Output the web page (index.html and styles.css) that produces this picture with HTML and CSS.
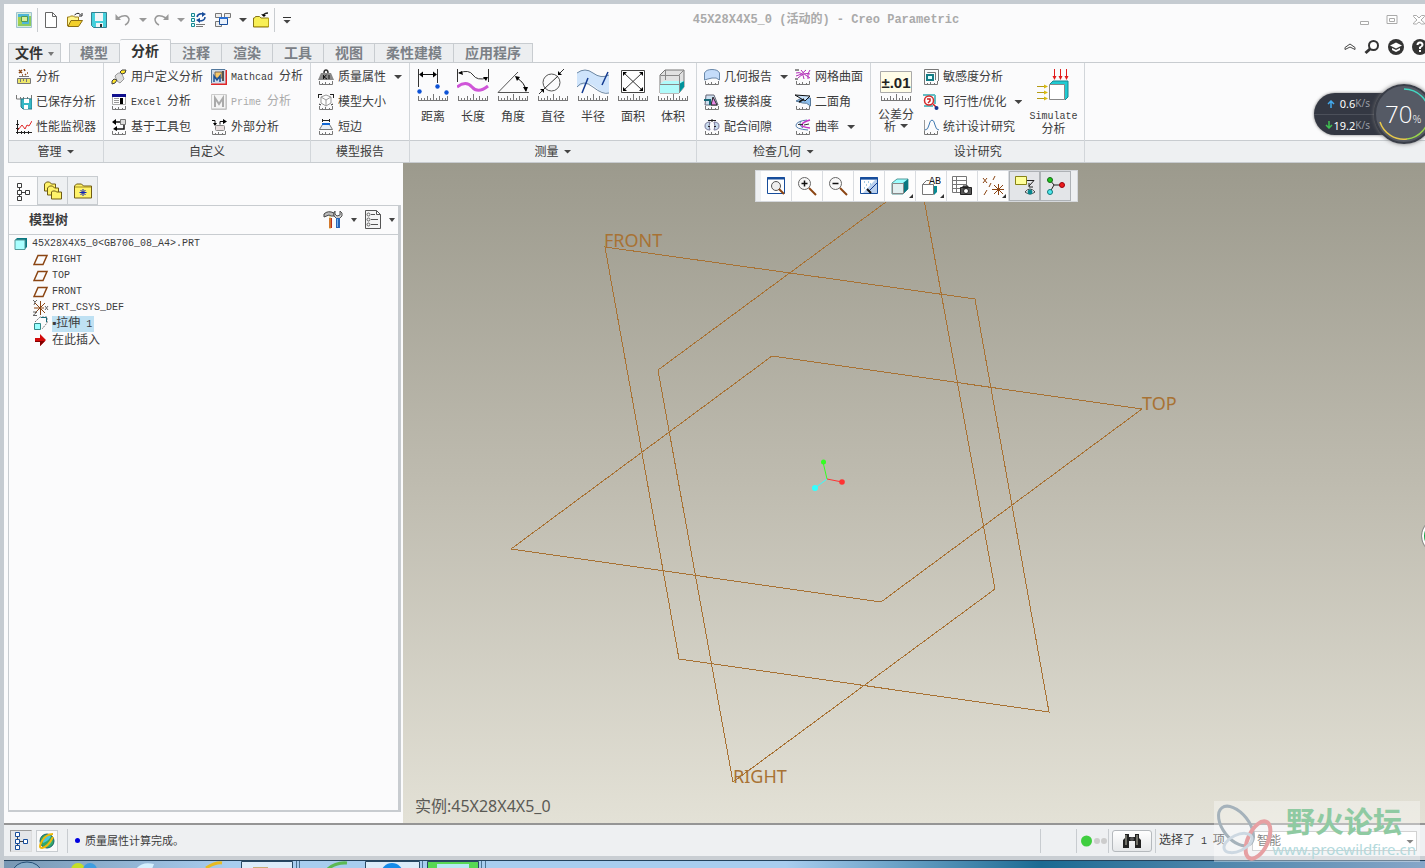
FILE: index.html
```html
<!DOCTYPE html>
<html lang="zh-CN">
<head>
<meta charset="utf-8">
<title>45X28X4X5_0 (活动的) - Creo Parametric</title>
<link rel="stylesheet" href="styles.css">
</head>
<body>
<svg class="sprite" aria-hidden="true">
  <symbol id="ruler" viewBox="0 0 16 4"><path d="M1.500 0v3.500h13V0M4.500 2v1M7.500 1v2M11.500 2v1" fill="none" stroke="#777"/></symbol>
  <symbol id="ruler-lg" viewBox="0 0 30 7"><path d="M0 6.500h30M.5 2v4M3.500 4v2M6.500 4v2M9.500 2v4M12.500 4v2M15.500 0v6M18.500 4v2M21.500 2v4M24.500 4v2M27.500 4v2M29.500 2v4" fill="none" stroke="#777"/></symbol>
  <symbol id="plane" viewBox="0 0 16 12"><path d="M5 1.500h9l-4 9H1z" fill="none" stroke="#8b4513" stroke-width="1.500"/></symbol>
  <symbol id="nodes" viewBox="0 0 14 18"><path d="M3.500 4v10M5 9.500h4" stroke="#444"/><path d="M1.500.5h4v4h-4zM1.500 7.500h4v4h-4zM1.500 13.500h4v4h-4zM9.500 7.500h4v4h-4z" fill="#fff" stroke="currentColor" stroke-width="1"/></symbol>
</svg>
<div class="app">
  <header class="titlebar">
    <div class="quick">
      <svg class="i16" viewBox="0 0 16 16"><path fill="#d5ecdd" stroke="#9fc3cf" d="M.5.500h15v15H.5z"/><path fill="#4eb6d8" d="M2 2h11v10H2z"/><path fill="#a6d04a" d="M2 5h4v7H2z"/><path fill="#d5ef9a" stroke="#4d9a55" d="M5.500 4.500h6v5h-6z"/><path d="M2 13h12V4" stroke="#8ccb5e" fill="none" stroke-width="2"/></svg>
      <i class="sep"></i>
      <button class="tool" aria-label="新建"><svg class="i16" viewBox="0 0 16 16"><path d="M2.500.5h7l4 4v11h-11zM9.500.5v4h4" fill="#fff" stroke="#666"/></svg></button>
      <button class="tool" aria-label="打开"><svg class="i16" viewBox="0 0 16 16"><path d="M.5 14V5h2l1-1h3l1 1h4v3" fill="#fff58a" stroke="#9b7b18"/><path d="M1 14.500 4 8.500h11.500l-4 6z" fill="#f2cf2b" stroke="#8d6f14"/><path d="M7.500 3q4-3.500 6 0M15 1v3h-3" fill="none" stroke="#222"/></svg></button>
      <button class="tool" aria-label="保存"><svg class="i16" viewBox="0 0 16 16"><path d="M.5.500h15v15h-13l-2-2z" fill="#45d0dc" stroke="#348090"/><path d="M4 1h8v8H4zM5 11h7v4H5z" fill="#f2f5f7"/><path d="M9 12h2v3H9z" fill="#333"/></svg></button>
      <button class="tool" aria-label="撤消"><svg class="i16" viewBox="0 0 16 16"><path d="M3 6q9-5 11 1 0 4-4 6" fill="none" stroke="#999" stroke-width="1.500"/><path d="M.5 8V2L6 8z" fill="#999"/></svg></button>
      <i class="caret dim"></i>
      <button class="tool" aria-label="重做"><svg class="i16" viewBox="0 0 16 16"><path d="M13 6Q4 1 2 7q0 4 4 6" fill="none" stroke="#999" stroke-width="1.500"/><path d="M15.500 8V2L10 8z" fill="#999"/></svg></button>
      <i class="caret dim"></i>
      <button class="tool" aria-label="重新生成"><svg class="i16" viewBox="0 0 16 16"><path d="M.5 1.500h3v3h-3zM.5 6.500h3v3h-3zM.5 11.500h3v3h-3z" fill="#d0ffff" stroke="#16858f"/><path d="M5 12.500h9M5 14.500h7" stroke="#777"/><path d="M6 5q1-4 6-3M14 5q0 4-6 4" fill="none" stroke="#174d9b" stroke-width="1.500"/><path d="M11 0v5l4-3zM9 6v5L5 8z" fill="#174d9b"/></svg></button>
      <button class="tool" aria-label="窗口"><svg class="i16" viewBox="0 0 16 16"><path d="M.5 1.500h6v4h-6zM9.500 1.500h6v4h-6zM.5 9.500h6v5h-6z" fill="#eee" stroke="#777"/><path d="M4.500 5.500h8v7h-8z" fill="#e8f0fb" stroke="#174d9b"/><path d="M4 6h9" stroke="#2b70d3" stroke-width="2"/></svg></button>
      <i class="caret"></i>
      <button class="tool" aria-label="关闭"><svg class="i16" viewBox="0 0 16 16"><path d="M.5 15V6h1l1-1.500h4L8 6h7.500v9z" fill="#f8ef56" stroke="#857519"/><path d="M1 14.500h14.500V6" fill="none" stroke="#b8a419"/><path d="M10 4q1-3 5-3" stroke="#222" fill="none" stroke-width="1.500"/><path d="m8 2 3 3 2-2z"/></svg></button>
      <i class="sep"></i>
      <button class="tool custom" aria-label="自定义快速访问工具栏"><i class="caret"></i></button>
    </div>
    <h1 class="title">45X28X4X5_0 (活动的) - Creo Parametric</h1>
    <div class="winbtns">
      <button class="tool" aria-label="最小化"><svg width="12" height="12" viewBox="0 0 12 12"><path d="M1.500 7.500h8v3h-8z" fill="#fff" stroke="#aaa"/></svg></button>
      <button class="tool" aria-label="还原"><svg width="12" height="12" viewBox="0 0 12 12"><path d="M1 1.500h10v8H1zM3.500 4.500h5v3h-5z" fill="#fff" stroke="#aaa"/></svg></button>
      <button class="tool" aria-label="关闭窗口"><svg width="12" height="12" viewBox="0 0 12 12"><path d="M.5 1.500h3L6 4l2.500-2.500h3v1L8 6l3.500 3v1h-3L6 8l-2.500 2h-3V9L4 6 .5 2.500z" fill="#fff" stroke="#aaa"/></svg></button>
    </div>
  </header>

  <nav class="tabs">
    <button class="tab file">文件<i class="caret small"></i></button>
    <button class="tab">模型</button><button class="tab active">分析</button><button class="tab">注释</button><button class="tab">渲染</button><button class="tab">工具</button><button class="tab">视图</button><button class="tab">柔性建模</button><button class="tab">应用程序</button>
    <div class="helpers">
      <button class="tool" aria-label="最小化功能区"><svg width="12" height="8" viewBox="0 0 12 8"><path d="M1 4.500 6 1l5 3.500v2L6 4 1 6.500z" fill="#fff" stroke="#444"/></svg></button>
      <button class="tool" aria-label="搜索"><svg class="i16" viewBox="0 0 16 16"><circle cx="9.500" cy="6.500" r="4.500" fill="#fff" stroke="#333" stroke-width="2"/><path d="m6 10-4.500 4" stroke="#333" stroke-width="3"/></svg></button>
      <button class="tool" aria-label="学习"><svg class="i16" viewBox="0 0 16 16"><circle cx="8" cy="8" r="8" fill="#333"/><path d="m2 6.500 6-3 6 3-6 3zM4 9l4 2 4-2v2l-4 2-4-2z" fill="#fff"/></svg></button>
      <button class="tool" aria-label="帮助"><svg class="i16" viewBox="0 0 16 16"><circle cx="8" cy="8" r="8" fill="#333"/><path d="M5.500 6q0-2.500 2.500-2.500T10.500 6Q10.500 7 8 8.500V10" fill="none" stroke="#fff" stroke-width="2"/><path d="M7 11h2v2H7z" fill="#fff"/></svg></button>
    </div>
  </nav>

  <section class="ribbon">
    <div class="group">
      <div class="body"><div class="col">
        <button class="cmd"><svg class="i16" viewBox="0 0 16 16"><path d="m3 1 3 3m0-3L3 4M8 0l1 2m2 2h1M6 6h1m2-1 1 1" stroke="#8b4513" stroke-width="1.500"/><path d="M3 7.500h10" stroke="#777"/><path d="M1.500 9.500h13v5h-13z" fill="#eee86a" stroke="#777"/><path d="M4.500 10v3m3-3v2m3-2v3" stroke="#777"/></svg>分析</button>
        <button class="cmd"><svg class="i16" viewBox="0 0 16 16"><path d="M.5 1v4h15V1M4.500 3v2m3-2v2m4-2v2" fill="none" stroke="#777"/><path d="M5 5h11v10H7l-2-2z" fill="#35b8c6" stroke="#267888"/><path d="M8 5h5v4H8zM8 11h4v4H8z" fill="#fff"/></svg>已保存分析</button>
        <button class="cmd"><svg class="i16" viewBox="0 0 16 16"><path d="M1.500 1v14M0 13.500h16M5.500 12v3m3-3v3m4-3v3M0 9.500h3M0 5.500h3" stroke="#222"/><path d="m2 11 4-5 3 4 2-4 2 1 3-5" fill="none" stroke="#e12626"/></svg>性能监视器</button>
      </div></div><button class="foot">管理<i class="caret"></i></button>
    </div>
    <div class="group">
      <div class="body"><div class="col">
        <button class="cmd"><svg class="i16" viewBox="0 0 16 16"><path d="M4 7q4-5 7-2l2 5-4 4-3-2z" fill="#ddd" stroke="#999"/><path d="m9 3 2-2 4 0-1 3-3 1zM1 12l2-2 3 1-2 3-3 1z" fill="#ffe52b" stroke="#444"/></svg>用户定义分析</button>
        <button class="cmd"><svg class="i16" viewBox="0 0 16 16"><path d="M1.500 1.500h13v9h-13z" fill="#fff" stroke="#aaa"/><path d="M1 0h14v3H1z" fill="#10108f"/><path d="M3 4.500h5m-5 2h5m-5 2h5" stroke="#999"/><path d="M9 4h3v6H9z"/><use href="#ruler" y="12" width="16" height="4"/></svg><span><span class="lat">Excel&nbsp;</span>分析</span></button>
        <button class="cmd"><svg class="i16" viewBox="0 0 16 16"><path d="M9.500.500h5v5h-5z" fill="#ddd" stroke="#777"/><path d="M9 3H3m10 3v4H4" fill="none" stroke="#111" stroke-width="1.500"/><path d="m5 0-4 3L5 6zM6 7 2 10l4 2z"/><use href="#ruler" y="12" width="16" height="4"/></svg>基于工具包</button>
      </div><div class="col">
        <button class="cmd"><svg class="i16" viewBox="0 0 16 16"><path d="M0 0h15v15H0z" fill="#cfdcea"/><path d="M0 15.500h15.500V1" fill="none" stroke="#e12626" stroke-width="2"/><path d="M.5 14V.5H14" fill="none" stroke="#51779c"/><path d="M4 3h7v6H4z" fill="#f6c86a" stroke="#765"/><path d="M3 13V7l3 4 3-4v6" fill="none" stroke="#1c5196" stroke-width="1.500"/><path d="M11 2h2v10h-2z" fill="#555"/></svg><span><span class="lat">Mathcad&nbsp;</span>分析</span></button>
        <button class="cmd off"><svg class="i16" viewBox="0 0 16 16"><path d="M.5.500h15v15H.5z" fill="#f5f5f5" stroke="#ccc"/><path d="M4 13V4l4 6 4-6v9" fill="none" stroke="#aaa" stroke-width="2"/><path d="M1 15h14V1" fill="none" stroke="#bbb"/></svg><span><span class="lat">Prime&nbsp;</span>分析</span></button>
        <button class="cmd"><svg class="i16" viewBox="0 0 16 16"><path d="M1 1.500h3v4m5 0v-3h4" fill="none" stroke="#111"/><path d="m2 4 2 3 2-3zM12 0l4 2.500L12 5z"/><rect x="4.500" y="6.500" width="9" height="5" rx="1" fill="#e8dede" stroke="#888"/><use href="#ruler" y="12" width="16" height="4"/></svg>外部分析</button>
      </div></div><div class="foot">自定义</div>
    </div>
    <div class="group">
      <div class="body"><div class="col">
        <button class="cmd"><svg class="i16" viewBox="0 0 16 16"><path d="M6 4q0-3 2-3t2 3" fill="none" stroke="#333" stroke-width="1.500"/><path d="M3 4h10l3 7H0z" fill="#888"/><path d="M5.500 6v4m3-4L6 8l3 2m2-4v4" stroke="#111" fill="none"/><use href="#ruler" y="12" width="16" height="4"/></svg>质量属性<i class="caret"></i></button>
        <button class="cmd"><svg class="i16" viewBox="0 0 16 16"><path d="M3 3 8 1l5 2v6l-5 3-5-3zM3 3l5 3 5-3M8 6v6" fill="#fff" stroke="#999"/><path d="M.5 1v3m15-3v3M0 .5h4m8 0h4M1 10l2 1m12-1-2 1" stroke="#222"/><use href="#ruler" y="12" width="16" height="4"/></svg>模型大小</button>
        <button class="cmd"><svg class="i16" viewBox="0 0 16 16"><path d="M4.500 0v3m7-3v3m-7-1.500h7" stroke="#222"/><path d="M4.500 5.500h7l3 5h-13z" fill="#e8eef5" stroke="#777"/><path d="M4 5h8" stroke="#1267d4" stroke-width="2"/><use href="#ruler" y="12" width="16" height="4"/></svg>短边</button>
      </div></div><div class="foot">模型报告</div>
    </div>
    <div class="group measure">
      <div class="body">
        <button class="big"><svg class="i32" viewBox="0 0 32 32"><path d="M1.500 0v18M20.500 0v14" stroke="#333"/><path d="M3 5.500h16" stroke="#111"/><path d="m2 5.500 4-3v6zM20 5.500l-4-3v6z"/><circle cx="2.500" cy="22.500" r="2.200" fill="#0d52d6"/><circle cx="20.500" cy="17.500" r="2.200" fill="#0d52d6"/><circle cx="29.500" cy="23.500" r="2.200" fill="#0d52d6"/><use href="#ruler-lg" x="1" y="25" width="30" height="7"/></svg>距离</button>
        <button class="big"><svg class="i32" viewBox="0 0 32 32"><path d="M.5 0v13M31.500 0v13" stroke="#333"/><path d="M2 4q10-4 14 2t14 3" fill="none" stroke="#333"/><path d="m1 4 4-2 1 4zM31 8l-5 0 3 4z"/><path d="M0 18q9-7 15 0t16-1" fill="none" stroke="#cf55d8" stroke-width="3"/><use href="#ruler-lg" x="1" y="25" width="30" height="7"/></svg>长度</button>
        <button class="big"><svg class="i32" viewBox="0 0 32 32"><path d="M21 3 1 23.500h31" fill="none" stroke="#555"/><path d="M20 9q8 5 9 13" fill="none" stroke="#111"/><path d="m18 7 5 1-3 4zM26 18h5l-2 5z"/><use href="#ruler-lg" x="1" y="25" width="30" height="7"/></svg>角度</button>
        <button class="big"><svg class="i32" viewBox="0 0 32 32"><circle cx="14.500" cy="13.500" r="8.500" fill="none" stroke="#555"/><path d="M7 20 21 7M2 25l4-4M27 0l-4 4" stroke="#333"/><path d="m7 20 0 4-4-4zM21 6V2l4 4z"/><use href="#ruler-lg" x="1" y="25" width="30" height="7"/></svg>直径</button>
        <button class="big"><svg class="i32" viewBox="0 0 32 32"><path d="M0 4q8-6 16 0t16 2v18q-8 0-14-6T0 18z" fill="#cfe4fb"/><path d="M0 4q8-6 16 0t16 2M0 18q6-8 16 0t16 6" fill="none" stroke="#6c87a3"/><path d="m5 24 6-15M25 16l6-13" stroke="#123a91" stroke-width="1.500"/><use href="#ruler-lg" x="1" y="25" width="30" height="7"/></svg>半径</button>
        <button class="big"><svg class="i32" viewBox="0 0 32 32"><path d="M4.500 1.500h23v22h-23z" fill="#fff" stroke="#444"/><path d="m7 4 18 17M25 4 7 21" stroke="#333"/><path d="M6 3h4l-4 4zM26 3h-4l4 4zM6 22h4l-4-4zM26 22h-4l4-4z"/><use href="#ruler-lg" x="1" y="25" width="30" height="7"/></svg>面积</button>
        <button class="big"><svg class="i32" viewBox="0 0 32 32"><path d="m3 6 5-5h19v17l-5 6H3z" fill="#e1e1e1" stroke="#777"/><path d="m3 15 4-3h20v6l-5 6H3z" fill="#b0fafa"/><path d="M22 15v9l5-6v-6z" fill="#00929b"/><path d="M3.500 6.500h19V24M22 6l5-5M8.500 1v10M3 15.500h19" fill="none" stroke="#888"/><use href="#ruler-lg" x="1" y="25" width="30" height="7"/></svg>体积</button>
      </div><button class="foot">测量<i class="caret"></i></button>
    </div>
    <div class="group">
      <div class="body geometry"><div class="col">
        <button class="cmd"><svg class="i16" viewBox="0 0 16 16"><path d="M.5 11V4Q2 .5 8 .5T15.500 4v7q-3-3-7.500-2T.5 11z" fill="#c4dcfa" stroke="#6a89ab"/><use href="#ruler" y="12" width="16" height="4"/></svg>几何报告<i class="caret"></i></button>
        <button class="cmd"><svg class="i16" viewBox="0 0 16 16"><path d="M2 1h8l4 10H1z" fill="#cddff0" stroke="#667"/><path d="m9 3 4 8H7z" fill="#e78be5" stroke="#222"/><path d="M0 6h6v5" fill="none" stroke="#186978" stroke-width="2"/><use href="#ruler" y="12" width="16" height="4"/></svg>拔模斜度</button>
        <button class="cmd"><svg class="i16" viewBox="0 0 16 16"><path d="M6 3Q1 3 1 7t5 4q-2-4 0-8zm4 0q5 0 5 4t-5 4q2-4 0-8z" fill="#c8dbed" stroke="#779"/><path d="M4 1.500h8M8 0v3M4 7.500h2m4 0h2" stroke="#222"/><use href="#ruler" y="12" width="16" height="4"/></svg>配合间隙</button>
      </div><div class="col">
        <button class="cmd"><svg class="i16" viewBox="0 0 16 16"><path d="M1 4q7-2 8 6M3 9q6-6 12-4M6 1q3 5 9 8M11 1q-4 5-10 6M15 1q-3 3-2 9" fill="none" stroke="#b22bb8"/><path d="M0 1h4m-4 9h3" stroke="#222"/><use href="#ruler" y="12" width="16" height="4"/></svg>网格曲面</button>
        <button class="cmd"><svg class="i16" viewBox="0 0 16 16"><path d="m1 7 6-3h8.500v8q-4-4-8-3z" fill="#8fc0ee" stroke="#579"/><path d="m0 1 15 1-5 5z" fill="#cbe3fa" stroke="#111"/><path d="m4 8 5-3" stroke="#111" stroke-width="1.500"/><use href="#ruler" y="12" width="16" height="4"/></svg>二面角</button>
        <button class="cmd"><svg class="i16" viewBox="0 0 16 16"><path d="M12 1Q2 2 1 6t12 5M6 2q-3 4 2 7" fill="none" stroke="#557fae"/><path d="M15 1Q8 3 7 5.500T15 9" fill="none" stroke="#c536c8" stroke-width="1.500"/><path d="M3 5.500h5M9 6l5-1" stroke="#333"/><use href="#ruler" y="12" width="16" height="4"/></svg>曲率<i class="caret"></i></button>
      </div></div><button class="foot">检查几何<i class="caret"></i></button>
    </div>
    <div class="group">
      <div class="body study">
        <button class="big"><svg class="i32" viewBox="0 0 32 32"><path d="M.5 2.500h31v21H.5z" fill="#fffde8" stroke="#aaa"/><text x="16" y="19" text-anchor="middle" class="tol">±.01</text><use href="#ruler-lg" x="1" y="25" width="30" height="7"/></svg><span class="two">公差分<br>析<i class="caret"></i></span></button>
        <div class="col">
          <button class="cmd"><svg class="i16" viewBox="0 0 16 16"><path d="M1.500 12V.5h14V12M4.500 4V3.500h8V11" fill="none" stroke="#777"/><path d="M4 6h6v5H4z" fill="#dff" stroke="#147c85" stroke-width="2"/><use href="#ruler" y="12" width="16" height="4"/></svg>敏感度分析</button>
          <button class="cmd"><svg class="i16" viewBox="0 0 16 16"><path d="M0 1h12M1 12h9M12 1v9" fill="none" stroke="#63bdc4" stroke-width="2"/><circle cx="6" cy="6.500" r="4.500" fill="#fff" stroke="#d42a2a" stroke-width="1.500"/><path d="M4 5h3v2l-2 2M10 10l3 3" fill="none" stroke="#c22" stroke-width="1.500"/><circle cx="13.500" cy="14" r="2" fill="#173790"/></svg>可行性/优化<i class="caret"></i></button>
          <button class="cmd"><svg class="i16" viewBox="0 0 16 16"><path d="M1.500 1v11" stroke="#999"/><path d="M2 11q3 0 4-5t3-5 3 5 4 5" fill="none" stroke="#3f78b0"/><use href="#ruler" y="12" width="16" height="4"/></svg>统计设计研究</button>
        </div>
        <button class="big"><svg class="i32" viewBox="0 0 32 32"><path d="M17.500 0v8M23.500 0v8M29.500 0v8" stroke="#e21b1b"/><path d="m15.500 7 2 4 2-4zm6 0 2 4 2-4zm6 0 2 4 2-4z" fill="#e21b1b"/><path d="M0 17.500h8M0 23.500h8M0 29.500h8" stroke="#b59b14"/><path d="m7 15.500 4 2-4 2zm0 6 4 2-4 2zm0 6 4 2-4 2z" fill="#d8b910"/><path d="m13 15 3-3h15v16l-3 3" fill="#20cbd2" stroke="#178891"/><path d="M12.500 15.500h15v15h-15z" fill="#fff" stroke="#888"/></svg><span class="two"><span class="lat">Simulate</span><br>分析</span></button>
      </div><div class="foot">设计研究</div>
    </div>
    <div class="group rest"><div class="body"></div><div class="foot"></div></div>
  </section>

  <main class="work">
    <aside class="side">
      <div class="sidetabs">
        <button class="sidetab on" aria-label="模型树"><svg width="14" height="18"><use href="#nodes"/></svg></button>
        <button class="sidetab" aria-label="文件夹浏览器"><svg width="20" height="20" viewBox="0 0 20 20"><g fill="#fff36a" stroke="#705c15"><path d="M1.500 10V3l2-2h3l2 2h4v7z"/><path d="M4.500 14V7l2-2h3l2 2h4v7z"/><path d="M8.500 18v-7l1-1h3l1 1h5v7z"/></g></svg></button>
        <button class="sidetab" aria-label="收藏夹"><svg width="18" height="18" viewBox="0 0 18 18"><path d="M.5 16V4l2-2h5l2 2h8v12z" fill="#fff36a" stroke="#705c15"/><path d="M1 5h16" stroke="#a58d1b"/><path d="M9 7v7M5.500 10.500h7m-6-2.500 5 5m0-5-5 5" stroke="#1022b8"/></svg></button>
      </div>
      <section class="panel">
        <div class="phead"><h2>模型树</h2>
          <button class="tool" aria-label="设置"><svg width="20" height="20" viewBox="0 0 20 20"><path d="M1 4q4-4 10-1v3H8L6 5 1 7z" fill="#bbb" stroke="#444"/><path d="M6 8h3v10H6z" fill="#b83221"/><path d="M7 6v13" stroke="#edc33d"/><path d="M12 1v3l2 2 3-1V1l2 2v3l-3 3h-2l-3-3V3z" fill="#ccc" stroke="#555"/><path d="M13 8h4v10h-4z" fill="#2865b6"/><path d="M14.500 9v8" stroke="#77b5ed"/></svg></button><i class="caret small"></i>
          <button class="tool list" aria-label="显示"><svg width="16" height="20" viewBox="0 0 16 20"><path d="M.5.500h11l4 4v14H.5zM11.500.5v4h4" fill="#f5f5f5" stroke="#555"/><path d="M6 4.500h4M6 9.500h7m-7 5h7" stroke="#555"/><circle cx="3.500" cy="4.500" r="1.500" fill="none" stroke="#666"/><circle cx="3.500" cy="9.500" r="1.500" fill="none" stroke="#666"/><circle cx="3.500" cy="14.500" r="1.500" fill="none" stroke="#666"/></svg></button><i class="caret small"></i>
        </div>
        <ul class="tree">
          <li class="root"><svg width="14" height="12" viewBox="0 0 14 12"><path d="m1 2 2-2h10v9l-3 3" fill="#087780"/><path d="M1 2h10v9.500H1z" fill="#aff" stroke="#599"/></svg><span class="lat">45X28X4X5_0&lt;GB706_08_A4&gt;.PRT</span></li>
          <li><svg width="16" height="12"><use href="#plane"/></svg><span class="lat">RIGHT</span></li>
          <li><svg width="16" height="12"><use href="#plane"/></svg><span class="lat">TOP</span></li>
          <li><svg width="16" height="12"><use href="#plane"/></svg><span class="lat">FRONT</span></li>
          <li><svg width="16" height="16" viewBox="0 0 16 16"><path d="m2 3 10 10M12 3 2 13M1 8h10M7.500 1v14" stroke="#8b4513"/><path d="m0 0 2 2 2-2M2 2 1 5m-1 7h4l-4 3.500h4M12 6l3 4m0-4-3 4" fill="none" stroke="#666"/></svg><span class="lat">PRT_CSYS_DEF</span></li>
          <li><svg width="16" height="16" viewBox="0 0 16 16"><path d="M1.500 7.500h6v6h-6z" fill="#9ff" stroke="#388"/><path d="m2 6 5-5h7v6l-5 6" fill="none" stroke="#777" stroke-dasharray="2 1"/><path d="M8 1.500h5.500V6" fill="none" stroke="#186978"/></svg><span class="sel">▪拉伸<span class="lat">&nbsp;1</span></span></li>
          <li><svg width="16" height="12" viewBox="0 0 16 12"><path d="M2 4h5V0l6 6-6 6V8H2z" fill="#d10a0a"/><path d="M2 7h10l-5 5V8H2z" fill="#820000"/></svg><span>在此插入</span></li>
        </ul>
      </section>
    </aside>
    <section class="view">
      <svg class="scene" viewBox="403 163 1022 660">
        <g fill="none" stroke="#a87234" shape-rendering="crispEdges"><path d="m605 247 370 52 74 413-370-53z"/><path d="m658 370 75 412 262-193-75-412z"/><path d="m772 356 370 53-261 193-370-53z"/></g>
        <g class="datum"><text x="604" y="247">FRONT</text><text x="1142" y="410">TOP</text><text x="733" y="783">RIGHT</text></g>
        <path d="m827 479-4-17" stroke="#3f2"/><path d="m827 479 15 3" stroke="#f33"/><path d="m827 479-12 9" stroke="#3ff"/>
        <circle cx="823.500" cy="462" r="2.500" fill="#3f2"/><circle cx="842" cy="482" r="2.800" fill="#f33"/><circle cx="815" cy="488" r="3" fill="#3ff"/>
      </svg>
      <div class="viewtools">
        <button aria-label="重新调整"><svg width="18" height="18" viewBox="0 0 18 18"><path d="M.5.500h17v16H.5z" fill="#fff" stroke="#174d9b"/><path d="M0 1.500h18" stroke="#174d9b" stroke-width="2"/><circle cx="9" cy="9" r="4.500" fill="#eee" stroke="#555"/><path d="m12 12 5 5" stroke="#8b4513" stroke-width="2"/></svg></button>
        <button aria-label="放大"><svg width="20" height="20" viewBox="0 0 20 20"><circle cx="7.500" cy="7.500" r="6" fill="#f8f8f8" stroke="#666"/><path d="M4.500 7.500h6m-3-3v6" stroke="#111" stroke-width="1.500"/><path d="m12 12 7 7" stroke="#8b4513" stroke-width="2"/></svg></button>
        <button aria-label="缩小"><svg width="20" height="20" viewBox="0 0 20 20"><circle cx="7.500" cy="7.500" r="6" fill="#f8f8f8" stroke="#666"/><path d="M4.500 7.500h6" stroke="#111" stroke-width="1.500"/><path d="m12 12 7 7" stroke="#8b4513" stroke-width="2"/></svg></button>
        <button aria-label="重画"><svg width="18" height="18" viewBox="0 0 18 18"><path d="M.5.500h17v16H.5z" fill="#b9d0ee" stroke="#174d9b"/><path d="M0 1.500h18" stroke="#174d9b" stroke-width="2"/><path d="M1 3h14L3 16H1z" fill="#fff"/><path d="m9 14 8-8" stroke="#123a91"/><path d="m7 12 4 4" stroke="#111" stroke-width="2"/><path d="M4 5h1m3 0h1m-3 3h1M4 11h1m5-4h1" stroke="#49c"/></svg></button>
        <button aria-label="显示样式" class="more"><svg width="18" height="18" viewBox="0 0 18 18"><path d="m1 6 5-4h11v10l-5 5H1z" fill="#9ff" stroke="#599"/><path d="M12 6v11l5-5V2z" fill="#087780"/><path d="M1.500 6.500h11v10h-11z" fill="#e1eff0" stroke="#888"/></svg></button>
        <button aria-label="已保存方向" class="more"><svg width="20" height="20" viewBox="0 0 20 20"><path d="M1.500 18.500v-10h11v10zM1.500 8.500l4-4h3" fill="#fff" stroke="#777"/><path d="M13 10h3v6l-3 3z" fill="#088b94"/><text x="8" y="8" class="ab">AB</text></svg></button>
        <button aria-label="视图管理器"><svg width="20" height="20" viewBox="0 0 20 20"><path d="M.5.500h14v16H.5zM.5 4.500h14m-14 4h14m-14 4h14M4.500 0v16" fill="#fff" stroke="#777"/><path d="M8.500 11.500h11v7h-11zM11 10h5v2h-5z" fill="#555" stroke="#222"/><circle cx="14" cy="15" r="2.500" fill="#fff" stroke="#222"/></svg></button>
        <button aria-label="基准显示" class="more"><svg width="22" height="20" viewBox="0 0 22 20"><path d="m1 2 4 5m0-5L1 7M13 0l-2 4m-2 3-2 4m-2 3-3 5M12 9l9 9m0-9-9 9M10 13.500h12M16.500 8v11" stroke="#8b4513"/></svg></button>
        <button aria-label="注释显示" class="pressed"><svg width="20" height="20" viewBox="0 0 20 20"><path d="M.5.500h11v8H.5z" fill="#ffff9b" stroke="#888315"/><path d="M12 4.500h7L14 10m0-3v4h4" fill="none" stroke="#222"/><path d="M10 16q5-6 10 0-5 4-10 0z" fill="#fff" stroke="#444"/><circle cx="15" cy="16" r="2.500" fill="#08858d"/></svg></button>
        <button aria-label="旋转中心" class="pressed"><svg width="18" height="18" viewBox="0 0 18 18"><path d="m3 3 4 5h8M7 8l-4 7" fill="none" stroke="#222"/><circle cx="3" cy="3" r="2.500" fill="#1fc71f" stroke="#176617"/><circle cx="15" cy="8" r="2.500" fill="#ed1c1c" stroke="#901"/><circle cx="3" cy="15" r="2.500" fill="#4fe9ef" stroke="#177"/></svg></button>
      </div>
      <p class="instance">实例:45X28X4X5_0</p>
      <svg class="edge" viewBox="0 0 36 36"><circle cx="18" cy="18" r="16" fill="#1aa346" stroke="#fff" stroke-width="2"/><circle cx="18" cy="18" r="17.500" fill="none" stroke="#888"/></svg>
    </section>
  </main>

  <footer class="status">
    <button class="sbtn down" aria-label="切换导航器"><svg width="14" height="18"><use href="#nodes"/></svg></button>
    <button class="sbtn" aria-label="切换浏览器"><svg width="18" height="18" viewBox="0 0 18 18"><circle cx="9" cy="9" r="7" fill="#35a866" stroke="#17616f"/><path d="M5 6q4-4 8-2-2 5-8 7zM7 14q5 0 7-5" fill="#4bc6de"/><path d="M15 2Q8 2 4 9T4 16q6-1 11-11" fill="none" stroke="#f0b90b" stroke-width="2"/></svg></button>
    <i class="sep"></i>
    <p class="msg"><i class="dot"></i>质量属性计算完成。</p>
    <div class="sright">
      <i class="sep"></i><i class="sep far"></i>
      <svg class="lights" width="26" height="12" viewBox="0 0 26 12"><circle cx="5.500" cy="6" r="5.500" fill="#3fce3f"/><circle cx="16" cy="6" r="3" fill="#ccc"/><circle cx="23" cy="6" r="3" fill="#ccc"/></svg>
      <i class="sep"></i>
      <button class="find" aria-label="查找"><svg width="18" height="16" viewBox="0 0 18 16"><path d="M2 1h4v3h6V1h4v4l2 2v8h-6V8H6v7H0V7l2-2z" fill="#222"/><path d="M3 2v10m11-10v10" stroke="#bba"/><circle cx="9" cy="6" r="2" fill="#555"/></svg></button>
      <i class="sep"></i>
      <span class="count">选择了<span class="lat">&nbsp;1&nbsp;</span>项</span>
      <label class="filter"><select aria-label="选择过滤器"><option>智能</option></select><i class="caret"></i></label>
    </div>
  </footer>
  <div class="taskbar">
    <svg width="560" height="8" viewBox="4 0 560 8"><ellipse cx="27" cy="11" rx="14" ry="10" fill="#89aeca" stroke="#244f75"/><circle cx="78" cy="9" r="7" fill="#c5df24"/><circle cx="90" cy="9" r="7" fill="#3e9de0"/><path d="M136 8q6-8 18-5l-2 5z" fill="#d5f0ff"/><path d="M206 7q10-6 16-5" stroke="#e7bb22" stroke-width="3" fill="none"/><path d="M241.500 8V.5h51V8M365.500 8V.5h54V8" fill="#dcecf9" stroke="#274863"/><path d="M296.500 0v8m3-8v8m123-8v8m59-8v8m4-8v8" stroke="#4a7392"/><path d="M253 6h15v2h-15z" fill="#c9ad77"/><path d="M328 8q8-7 19-6" fill="none" stroke="#5cb954" stroke-width="3"/><circle cx="392" cy="13" r="11" fill="#168be8"/><path d="M427.500 8V.5h51V8" fill="#58d853" stroke="#274863"/><path d="M437 3h32v5h-32z" fill="#b8e9f3"/></svg>
  </div>

  <aside class="speed">
    <div class="rates"><p><svg width="8" height="8" viewBox="0 0 8 8"><path d="M4 8V1M1 4l3-3 3 3" fill="none" stroke="#43a9ed" stroke-width="1.500"/></svg>0.6<small>K/s</small></p><p><svg width="8" height="8" viewBox="0 0 8 8"><path d="M4 0v7M1 4l3 3 3-3" fill="none" stroke="#3fc252" stroke-width="1.500"/></svg>19.2<small>K/s</small></p></div>
    <div class="gauge"><svg viewBox="0 0 60 60"><circle cx="30" cy="30" r="29" fill="#555a65" stroke="#3a3e48" stroke-width="2"/><path d="M30 5a25 25 0 0 1 25 25" fill="none" stroke="#43d8c2" stroke-width="1.500"/><path d="M55 30a25 25 0 0 1-22 25" fill="none" stroke="#9ad84a" stroke-width="1.500"/><path d="M33 55A25 25 0 0 1 6 38" fill="none" stroke="#e8c94b" stroke-width="1.500"/></svg><span>70<small>%</small></span></div>
  </aside>
  <div class="mark">
    <svg width="60" height="60" viewBox="0 0 60 60" fill="none"><ellipse cx="22" cy="25" rx="13" ry="23" transform="rotate(-38 22 25)" stroke="#a5b2bb" stroke-width="3"/><ellipse cx="44" cy="39" rx="10" ry="20" transform="rotate(25 44 39)" stroke="#e6a0a3" stroke-width="4"/><ellipse cx="24" cy="42" rx="15" ry="8" transform="rotate(-25 24 42)" stroke="#cdd8e2" stroke-width="3"/></svg>
    <div><strong>野火论坛</strong><span>www.proewildfire.cn</span></div>
  </div>
</div>
</body>
</html>
```
FILE: styles.css
```css
* { box-sizing: border-box; }
body { margin: 0; overflow: hidden; font: 12px/16px "Liberation Sans", "Noto Sans CJK SC", sans-serif; color: #3c3c3c; }
h1, h2, p, ul { margin: 0; padding: 0; font-size: inherit; }
button { margin: 0; padding: 0; border: 0; background: none; font: inherit; color: inherit; cursor: pointer; }
svg { display: block; flex: none; }
.sprite { display: none; }
.i16 { width: 16px; height: 16px; }
.i32 { width: 32px; height: 32px; }
.lat { font-family: "Liberation Mono", monospace; font-size: 10px; }
.sep { flex: none; width: 1px; height: 24px; background: #c8ccd0; }
.caret { flex: none; display: inline-block; width: 8px; height: 4px; background: #444; clip-path: polygon(0 0, 100% 0, 50% 100%); }
.caret.dim { background: #999; }
.caret.small { width: 6px; height: 4px; }

.app { position: relative; display: flex; flex-direction: column; height: 100vh; overflow: hidden; background: #fbfbfc; border-top: 4px solid #c5cbd1; border-left: 4px solid #c5cbd1; }

.titlebar { display: flex; align-items: center; height: 35px; padding: 0 0 3px 12px; }
.quick { display: flex; align-items: center; gap: 8px; }
.quick > .sep { margin: 0 -3px; }
.quick > .caret { margin-right: -2px; }
.custom { padding: 4px 2px 4px 3px; }
.custom .caret { display: block; }
.custom::before { content: ""; display: block; width: 8px; height: 1px; margin-bottom: 2px; background: #333; }
.title { flex: 1; text-align: center; font: bold 12px/16px "Liberation Mono", "Noto Sans CJK SC", monospace; color: #aaa; white-space: nowrap; }
.winbtns { display: flex; gap: 15px; }

.tabs { display: flex; align-items: flex-end; height: 24px; padding-left: 4px; margin-bottom: -1px; position: relative; }
.tab { height: 20px; padding: 0 11px; border: 1px solid #c8ccd0; border-left-width: 0; background: #eceef0; color: #7b8086; font-size: 14px; font-weight: bold; line-height: 18px; white-space: nowrap; }
.tab.file { margin-right: 8px; padding: 0 6px; border-left-width: 1px; color: #333; }
.tab.file + .tab { border-left-width: 1px; padding-left: 10px; }
.tab.file .caret { margin: 0 0 2px 5px; background: #777; }
.tab.active { height: 24px; padding-bottom: 2px; border-bottom: 0; border-radius: 2px 2px 0 0; background: #fbfbfc; color: #333; line-height: 22px; }
.helpers { display: flex; align-items: center; gap: 8px; height: 32px; margin: 0 -3px 0 auto; }

.ribbon { display: flex; height: 101px; margin-left: 4px; border: solid #c8ccd0; border-width: 1px 0 1px 1px; }
.group { display: flex; flex-direction: column; border-right: 1px solid #d2d6da; }
.group.rest { flex: 1; border-right: 0; }
.body { flex: 1; display: flex; gap: 8px; padding: 2px 7px 0; }
.body.geometry { gap: 7px; }
.measure .body { gap: 0; padding: 2px 3px 0; }
.body.study { gap: 7px; padding-left: 5px; }
.col { display: flex; flex-direction: column; gap: 1px; }
.cmd { display: flex; align-items: center; gap: 4px; height: 24px; white-space: nowrap; }
.cmd .caret { margin-left: 4px; }
.cmd.off { color: #aaa; }
.big { display: flex; flex-direction: column; align-items: center; min-width: 40px; padding-top: 4px; gap: 8px; white-space: nowrap; }
.big .two { line-height: 12px; }
.big .two .caret { margin: 0 0 3px 4px; }
.tol { font: bold 15px "Liberation Sans", sans-serif; fill: #222; }
.foot { display: flex; align-items: center; justify-content: center; gap: 5px; width: 100%; height: 22px; border-top: 1px solid #c8ccd0; background: #eef0f2; }

.work { flex: 1; display: flex; min-height: 0; }
.side { flex: none; display: flex; flex-direction: column; width: 399px; padding: 13px 2px 11px 4px; }
.sidetabs { display: flex; }
.sidetab { display: flex; align-items: center; justify-content: center; width: 30px; height: 29px; border: 1px solid #c8ccd0; border-left-width: 0; background: #eef0f2; }
.sidetab.on { height: 30px; margin-bottom: -1px; border-left-width: 1px; border-bottom: 0; background: #fbfbfc; }
.panel { flex: 1; border: 1px solid #c8ccd0; border-right-width: 3px; border-bottom-width: 2px; }
.phead { display: flex; align-items: center; height: 29px; padding: 0 3px 0 20px; gap: 8px; border-bottom: 1px solid #c8ccd0; }
.phead h2 { flex: 1; font-size: 13px; line-height: 16px; }
.tree { list-style: none; padding: 1px 0 0 24px; }
.tree li { display: flex; align-items: center; gap: 3px; height: 16px; white-space: nowrap; }
.tree .root { margin-left: -20px; gap: 4px; padding-left: 1px; }
.tree .sel { background: #bfe1f3; padding-right: 2px; line-height: 14px; }

.view { position: relative; flex: 1; min-width: 0; overflow: hidden; background: linear-gradient(#9c9a8d, #bebbaf 48%, #e3e1d6); }
.scene { position: absolute; inset: 0; width: 100%; height: 100%; }
.datum { font: 18px "Noto Sans", sans-serif; fill: #a87234; }
.viewtools { position: absolute; left: 352px; top: 7px; display: flex; height: 32px; padding: 0 6px 0 5px; border: 1px solid #d5d8dc; background: #eef0f2; }
.viewtools button { position: relative; display: flex; align-items: center; justify-content: center; width: 31px; border-right: 1px solid #d9dce0; background: #fdfdfd; }
.viewtools .pressed { border: 1px solid #aeb2b6; background: #e3e5e8; }
.viewtools .more::after { content: ""; position: absolute; right: 2px; bottom: 3px; width: 4px; height: 4px; background: #333; clip-path: polygon(100% 0, 100% 100%, 0 100%); }
.ab { font: 10px "Liberation Mono", monospace; fill: #111; }
.instance { position: absolute; left: 12px; bottom: 6px; font: 16px/22px "Noto Sans", "Noto Sans CJK SC", sans-serif; color: #5b5a55; }
.edge { position: absolute; right: -32px; top: 355px; width: 36px; height: 36px; }

.status { display: flex; align-items: center; height: 37px; padding: 0 8px 0 6px; border-top: 2px solid #959595; border-bottom: 4px solid #c9ced3; background: #eef0f2; }
.sbtn { display: flex; align-items: center; justify-content: center; width: 22px; height: 22px; margin-right: 4px; border: 1px solid #c8ccd0; background: #fafafa; }
.sbtn.down { border-color: #999 #ddd #ddd #999; background: #e3e5e8; color: #174d9b; }
.status > .sep { margin-left: 5px; }
.msg { display: flex; align-items: center; gap: 5px; margin-left: 7px; font-size: 11px; }
.dot { width: 5px; height: 5px; border-radius: 50%; background: #0000e0; }
.sright { display: flex; align-items: center; margin-left: auto; gap: 3px; }
.sright .far { margin: 0 1px 0 32px; }
.lights { margin-right: -2px; }
.find { display: flex; align-items: center; justify-content: center; width: 40px; height: 22px; border: 1px solid #b5b9bd; border-radius: 3px; background: linear-gradient(#fff, #e6e8ea); }
.count { width: 90px; white-space: nowrap; }
.filter { position: relative; display: block; width: 165px; height: 20px; }
.filter select { appearance: none; display: block; width: 100%; height: 100%; padding: 0 4px; border: 1px solid #bbb; border-radius: 0; background: #fff; font: inherit; color: #444; }
.filter .caret { position: absolute; right: 3px; top: 9px; }

.taskbar { flex: none; height: 8px; border-top: 1px solid #24425c; background: linear-gradient(90deg, #7797b3, #a8cdef 16%, #a8cdef 55%, #1b6a92 73%, #2d739b 77%, #86a6c8); }

.speed { position: absolute; right: -9px; top: 80px; display: flex; align-items: center; color: #fff; }
.rates { width: 70px; height: 42px; margin-right: -10px; border-radius: 21px 0 0 21px; background: #343843; box-shadow: 0 0 3px #777; font: 11px/21px "Noto Sans", sans-serif; }
.rates p { display: flex; align-items: center; justify-content: flex-end; gap: 0; height: 21px; padding-right: 14px; }
.rates p + p { border-top: 1px solid #4c505a; }
.rates p:first-child svg { margin-right: 5px; }
.rates small { color: #999da6; font-size: 10px; }
.gauge { position: relative; width: 60px; height: 60px; border-radius: 50%; box-shadow: 0 0 4px #777; }
.gauge span { position: absolute; left: 11px; top: 15px; font: 300 24px/30px "Open Sans", sans-serif; }
.gauge small { font-size: 11px; }

.mark { position: absolute; right: 5px; bottom: 6px; display: flex; width: 206px; height: 61px; background: rgba(255, 255, 255, .35); }
.mark div { display: flex; flex-direction: column; align-items: flex-end; flex: 1; margin-right: 4px; }
.mark strong { margin-right: 14px; font: bold 29px/38px "Noto Sans CJK SC", sans-serif; color: #8fcaa2; }
.mark span { margin-left: -10px; font: 15px/20px "Noto Sans", sans-serif; color: #b3d9dc; }
```
